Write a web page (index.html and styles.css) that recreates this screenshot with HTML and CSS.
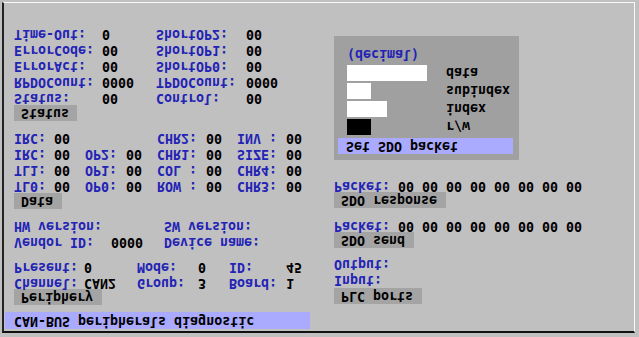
FILE: index.html
```html
<!DOCTYPE html>
<html lang="en">
<head>
    <meta charset="UTF-8">
    <title>CAN-BUS peripherals diagnostic</title>
    <link rel="stylesheet" href="styles.css">
</head>
<body>

    <div class="screen">
        <div class="frame">
            <div class="title">CAN-BUS peripherals diagnostic</div>

            <div class="panes">
                <div class="pane left">
                    <div class="btn periph-btn">Periphery</div>
                    <div class="grid periph">
                        <span class="k">Channel:</span><span>CAN2</span>
                        <span class="k">Group:</span><span>3</span>
                        <span class="k">Board:</span><span>1</span>
                        <span class="k">Present:</span><span>0</span>
                        <span class="k">Mode:</span><span>0</span>
                        <span class="k">ID:</span><span>45</span>
                    </div>
                    <div class="grid version">
                        <span class="k">Vendor ID:</span><span>0000</span><span class="k">Device name:</span>
                        <span class="k">HW version:</span><span></span><span class="k">SW version:</span>
                    </div>

                    <div class="btn data-btn">Data</div>
                    <div class="grid data">
                        <span class="k">TL0:</span><span>00</span><span class="k">OP0:</span><span>00</span>
                        <span class="k">ROW :</span><span>00</span><span class="k">CHR3:</span><span>00</span>
                        <span class="k">TL1:</span><span>00</span><span class="k">OP1:</span><span>00</span>
                        <span class="k">COL :</span><span>00</span><span class="k">CHR4:</span><span>00</span>
                        <span class="k">IRC:</span><span>00</span><span class="k">OP2:</span><span>00</span>
                        <span class="k">CHR1:</span><span>00</span><span class="k">SIZE:</span><span>00</span>
                        <span class="k">IRC:</span><span>00</span><span></span><span></span>
                        <span class="k">CHR2:</span><span>00</span><span class="k">INV :</span><span>00</span>
                    </div>

                    <div class="btn status-btn">Status</div>
                    <div class="grid status">
                        <span class="k">Status:</span><span>00</span><span class="k">Control:</span><span>00</span>
                        <span class="k">RPDOCount:</span><span>0000</span><span class="k">TPDOCount:</span><span>0000</span>
                        <span class="k">ErrorAct:</span><span>00</span><span class="k">ShortOP0:</span><span>00</span>
                        <span class="k">ErrorCode:</span><span>00</span><span class="k">ShortOP1:</span><span>00</span>
                        <span class="k">Time-Out:</span><span>0</span><span class="k">ShortOP2:</span><span>00</span>
                    </div>
                </div>

                <div class="pane right">
                    <div class="btn plc-btn">PLC ports</div>
                    <div class="k">Input:</div>
                    <div class="k">Output:</div>

                    <div class="btn send-btn">SDO send</div>
                    <div class="packet">
                        <span class="k">Packet:</span>
                        <span>00</span><span>00</span><span>00</span><span>00</span>
                        <span>00</span><span>00</span><span>00</span><span>00</span>
                    </div>

                    <div class="btn resp-btn">SDO response</div>
                    <div class="packet">
                        <span class="k">Packet:</span>
                        <span>00</span><span>00</span><span>00</span><span>00</span>
                        <span>00</span><span>00</span><span>00</span><span>00</span>
                    </div>

                    <div class="sdo-box">
                        <div class="set-bar">Set SDO packet</div>
                        <div class="field rw-row">
                            <div class="slot"><div class="bar black w24"></div></div>
                            <span class="field-name">r/w</span>
                        </div>
                        <div class="field">
                            <div class="slot"><div class="bar w40"></div></div>
                            <span class="field-name">index</span>
                        </div>
                        <div class="field">
                            <div class="slot"><div class="bar w24"></div></div>
                            <span class="field-name">subindex</span>
                        </div>
                        <div class="field">
                            <div class="slot"><div class="bar w80"></div></div>
                            <span class="field-name">data</span>
                        </div>
                        <div class="k decimal">(decimal)</div>
                    </div>
                </div>
            </div>
        </div>
    </div>

</body>
</html>
```

FILE: styles.css
```css
body {
    margin: 0;
    background-color: #c0c0c0;
    overflow: hidden;
}

/* the whole screen is shown upside down */
.screen {
    width: 639px;
    height: 337px;
    overflow: hidden;
    background-color: #c0c0c0;
    transform: scaleY(-1);
    font-family: "DejaVu Sans Mono", monospace;
    font-weight: bold;
    font-size: 13.3px;
    line-height: 16px;
    color: #000;
}

.frame {
    box-sizing: border-box;
    width: 633px;
    height: 331px;
    margin: 4px 0 0 2px;
    border-top: 2px solid #111;
    border-left: 2px solid #222;
    border-right: 1px solid #fafafa;
    border-bottom: 1px solid #fafafa;
}

.title {
    box-sizing: border-box;
    width: 305px;
    height: 17px;
    margin: 2px 0 0 1px;
    padding-left: 9px;
    background-color: #aaaaff;
    white-space: pre;
}

.panes {
    display: flex;
    padding-left: 10px;
}

.pane.left {
    width: 320px;
}

.pane.right {
    flex: 1;
}

.k {
    color: #2323b6;
    white-space: pre;
}

.btn {
    box-sizing: border-box;
    height: 16px;
    padding-left: 7px;
    background-color: #a4a4a4;
    white-space: pre;
}

.periph-btn { width: 88px; margin-top: 7px; }
.data-btn { width: 48px; margin-top: 9px; }
.status-btn { width: 63px; margin-top: 9px; }
.plc-btn { width: 88px; margin-top: 8px; }
.send-btn { width: 80px; margin-top: 8px; }
.resp-btn { width: 112px; margin-top: 10px; }

.grid {
    display: grid;
}

.periph {
    grid-template-columns: 70px 53px 61px 31px 57px auto;
    margin-top: -2px;
}

.version {
    grid-template-columns: 97px 53px auto;
    margin-top: 9px;
}

.data {
    grid-template-columns: 40px 31px 41px 31px 49px 31px 49px auto;
    margin-top: -1px;
}

.status {
    grid-template-columns: 88px 54px 90px auto;
    margin-top: -1px;
}

.packet {
    display: flex;
    gap: 8px;
    margin-top: -2px;
}

.packet .k {
    width: 56px;
}

.sdo-box {
    box-sizing: border-box;
    width: 185px;
    height: 124px;
    margin-top: 18px;
    padding-top: 6px;
    background-color: #a0a0a0;
}

.set-bar {
    box-sizing: border-box;
    width: 175px;
    height: 16px;
    margin-left: 4px;
    padding-left: 8px;
    background-color: #aaaaff;
    white-space: pre;
}

.field {
    display: flex;
    margin: 2px 0 0 13px;
    height: 16px;
}

.rw-row {
    margin-top: 3px;
}

.slot {
    width: 99px;
}

.bar {
    height: 16px;
    background-color: #fff;
}

.bar.black { background-color: #000; }
.w24 { width: 24px; }
.w40 { width: 40px; }
.w80 { width: 80px; }

.field-name {
    position: relative;
    top: 1px;
}

.decimal {
    margin: 3px 0 0 13px;
}
```
